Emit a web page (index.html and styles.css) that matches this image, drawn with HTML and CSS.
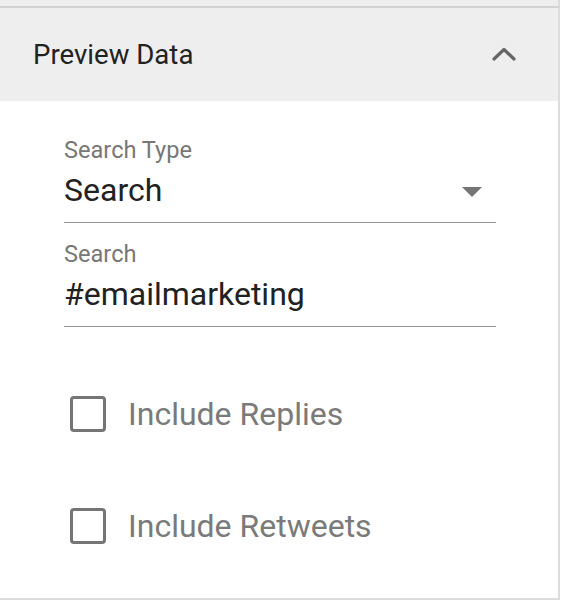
FILE: index.html
```html
<!DOCTYPE html>
<html>
<head>
<meta charset="utf-8">
<link rel="stylesheet" href="styles.css">
</head>
<body>
<div class="prev"></div>
<section class="panel">
  <div class="panel-head">
    <span class="title">Preview Data</span>
    <svg class="chev" width="24" height="14" viewBox="0 0 24 14"><path d="M2 12 L12 2.5 L22 12" fill="none" stroke="#666" stroke-width="3.2" stroke-linecap="round" stroke-linejoin="round"/></svg>
  </div>
  <div class="panel-body">
    <div class="field">
      <div class="label">Search Type</div>
      <div class="value select">Search<svg class="caret" width="20" height="10" viewBox="0 0 20 10"><path d="M0 0 H20 L10 10 Z" fill="#757575"/></svg></div>
    </div>
    <div class="field">
      <div class="label">Search</div>
      <div class="value">#emailmarketing</div>
    </div>
    <div class="checks">
      <label class="check"><span class="box"></span><span class="ctext">Include Replies</span></label>
      <label class="check"><span class="box"></span><span class="ctext">Include Retweets</span></label>
    </div>
  </div>
</section>
</body>
</html>
```
FILE: styles.css
```css
html, body { margin: 0; padding: 0; background: #fff; }
body { font-family: Roboto, "Noto Sans", sans-serif; width: 561px; height: 602px; overflow: hidden; }
.prev { height: 6px; width: 558px; background: #eeeeee; border-right: 2px solid #dcdcdc; }
.panel { width: 558px; border-top: 2px solid #d2d2d2; border-right: 2px solid #dcdcdc; border-bottom: 2px solid #dcdcdc; height: 590px; box-sizing: content-box; }
.panel-head { height: 93px; background: #eeeeee; display: flex; align-items: center; justify-content: space-between; padding: 0 42px 0 33px; }
.title { font-size: 27.6px; color: #222; }
.chev { margin-top: -2px; }
.panel-body { padding: 34px 62px 0 64px; }
.field { border-bottom: 1px solid #949494; height: 88px; box-sizing: border-box; margin-bottom: 16px; }
.label { font-size: 23.6px; color: #777; line-height: 26px; padding-top: 2px; }
.value { font-size: 32px; color: #212121; line-height: 38px; margin-top: 8px; }
.select { display: flex; align-items: center; justify-content: space-between; padding-right: 14px; }
.caret { margin-top: 4px; }
.checks { padding-top: 15px; }
.check { display: flex; align-items: center; height: 112px; }
.box { width: 30px; height: 30px; border: 3px solid #757575; border-radius: 4px; margin-left: 6px; margin-right: 22px; flex: none; }
.ctext { font-size: 32px; color: #7a7a7a; }
```
